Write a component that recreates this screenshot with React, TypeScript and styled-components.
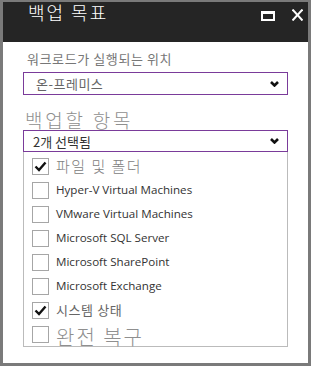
import React from "react";
import styled, { createGlobalStyle } from "styled-components";

const Global = createGlobalStyle`
  html, body { margin: 0; padding: 0; background: #ffffff; }
  body { font-family: "Open Sans", "Noto Sans CJK KR", sans-serif; }
  * { box-sizing: border-box; }
`;

const KR = `"Noto Sans CJK KR", "Noto Sans", sans-serif`;

const Frame = styled.div`
  width: 311px;
  height: 366px;
  border-style: solid;
  border-color: #7a7a7a;
  border-width: 2px 3px 3px 3px;
  background: #ffffff;
  display: flex;
  flex-direction: column;
  overflow: hidden;
`;

const Header = styled.div`
  height: 40px;
  background: #252525;
  display: flex;
  align-items: flex-start;
  padding: 0 5px 0 25px;
  flex-shrink: 0;
`;

const Title = styled.div`
  font-family: ${KR};
  font-size: 18px;
  line-height: 20px;
  font-weight: 300;
  color: #ffffff;
  letter-spacing: 2px;
  flex: 1;
`;

const HeaderIcons = styled.div`
  display: flex;
  align-items: flex-start;
  gap: 17px;
  padding-top: 7px;
`;

const Content = styled.div`
  padding: 8px 20px 0 20px;
  display: flex;
  flex-direction: column;
`;

const Label = styled.div`
  font-family: ${KR};
  font-size: 13px;
  line-height: 18px;
  color: #777777;
  letter-spacing: 0.6px;
  padding-left: 4px;
  margin-bottom: 4px;
`;

const Select = styled.div<{ $dark?: boolean }>`
  height: ${(p) => (p.$dark ? 22 : 23)}px;
  border: 1px solid #7a3b9a;
  display: flex;
  align-items: center;
  justify-content: space-between;
  padding: 0 8px 0 ${(p) => (p.$dark ? 9 : 12)}px;
  font-family: ${KR};
  font-size: 13px;
  color: ${(p) => (p.$dark ? "#333333" : "#666666")};
  letter-spacing: ${(p) => (p.$dark ? 0 : 0.5)}px;
`;

const Heading = styled.div`
  font-family: ${KR};
  font-size: 19px;
  line-height: 20px;
  height: 20px;
  font-weight: 300;
  color: #8f8f8f;
  letter-spacing: 2.8px;
  padding-left: 2px;
  margin-top: 15px;
  white-space: nowrap;
`;

const List = styled.div`
  height: 195px;
  border: 1px solid #bbbbbb;
  border-top: none;
  padding: 2px 0 0 8px;
  display: flex;
  flex-direction: column;
`;

const Row = styled.div`
  height: 24px;
  display: flex;
  align-items: center;
  gap: 7px;
  flex-shrink: 0;
`;

const Box = styled.div`
  width: 17px;
  height: 17px;
  border: 1px solid #a6a6a6;
  display: flex;
  align-items: center;
  justify-content: center;
  flex-shrink: 0;
  background: #fff;
`;

const ItemText = styled.span<{ $kr?: "big" | "mid" | "small" }>`
  white-space: nowrap;
  font-family: ${(p) => (p.$kr ? KR : `"Open Sans", sans-serif`)};
  font-size: ${(p) =>
    p.$kr === "big" ? 20 : p.$kr === "mid" ? 15 : p.$kr === "small" ? 13 : 11.6}px;
  font-weight: ${(p) => (p.$kr === "big" || p.$kr === "mid" ? 300 : 400)};
  letter-spacing: ${(p) =>
    p.$kr === "big" ? 2 : p.$kr === "mid" ? 1.5 : p.$kr === "small" ? 0.6 : 0}px;
  color: ${(p) =>
    p.$kr === "big" ? "#8f8f8f" : p.$kr === "mid" ? "#808080" : p.$kr === "small" ? "#666666" : "#333333"};
  line-height: 20px;
  margin-top: ${(p) => (p.$kr === "big" ? 6 : 0)}px;
`;

const Chevron = () => (
  <svg width="9" height="6" viewBox="0 0 9 6">
    <polyline points="1,1 4.5,4.5 8,1" fill="none" stroke="#111" strokeWidth="2.6" />
  </svg>
);

const Check = () => (
  <svg width="13" height="11" viewBox="0 0 13 11">
    <polyline points="1.5,5.5 5,9 11.5,1.5" fill="none" stroke="#111" strokeWidth="2.4" />
  </svg>
);

const MaxIcon = () => (
  <svg width="14" height="10" viewBox="0 0 14 10" style={{ marginTop: 2 }}>
    <rect x="0" y="0" width="14" height="10" fill="#fff" />
    <rect x="2" y="3" width="10" height="5" fill="#252525" />
  </svg>
);

const CloseIcon = () => (
  <svg width="11" height="12" viewBox="0 0 11 12">
    <line x1="0.5" y1="0.5" x2="10.5" y2="11.5" stroke="#fff" strokeWidth="2" />
    <line x1="10.5" y1="0.5" x2="0.5" y2="11.5" stroke="#fff" strokeWidth="2" />
  </svg>
);

type Item = { text: string; checked?: boolean; kr?: "big" | "mid" | "small" };

const items: Item[] = [
  { text: "파일 및 폴더", checked: true, kr: "mid" },
  { text: "Hyper-V Virtual Machines" },
  { text: "VMware Virtual Machines" },
  { text: "Microsoft SQL Server" },
  { text: "Microsoft SharePoint" },
  { text: "Microsoft Exchange" },
  { text: "시스템 상태", checked: true, kr: "small" },
  { text: "완전 복구", kr: "big" },
];

export default function App() {
  return (
    <>
      <Global />
      <Frame>
        <Header>
          <Title>백업 목표</Title>
          <HeaderIcons>
            <MaxIcon />
            <CloseIcon />
          </HeaderIcons>
        </Header>
        <Content>
          <Label>워크로드가 실행되는 위치</Label>
          <Select>
            <span>온-프레미스</span>
            <Chevron />
          </Select>
          <Heading>백업할 항목</Heading>
          <Select $dark>
            <span>2개 선택됨</span>
            <Chevron />
          </Select>
          <List>
            {items.map((it) => (
              <Row key={it.text}>
                <Box>{it.checked && <Check />}</Box>
                <ItemText $kr={it.kr}>{it.text}</ItemText>
              </Row>
            ))}
          </List>
        </Content>
      </Frame>
    </>
  );
}
